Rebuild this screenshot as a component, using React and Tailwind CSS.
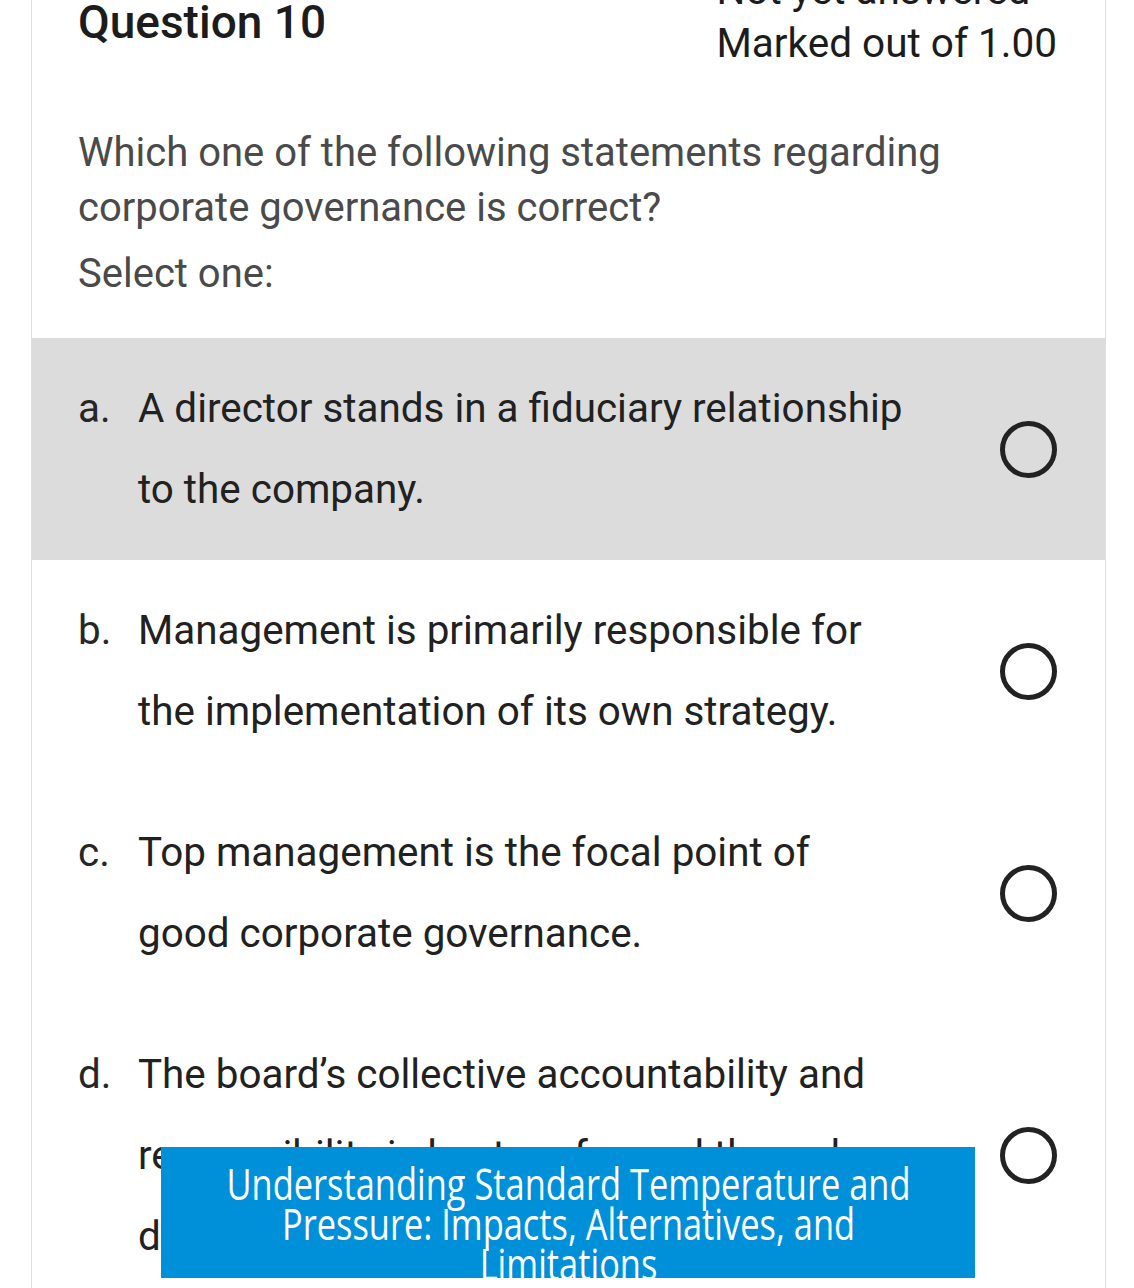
export default function App() {
  const options = [
    { l: "a.", t: "A director stands in a fiduciary relationship to the company.", bg: "bg-[#dcdcdc]" },
    { l: "b.", t: "Management is primarily responsible for the implementation of its own strategy.", bg: "" },
    { l: "c.", t: "Top management is the focal point of good corporate governance.", bg: "" },
    { l: "d.", t: "The board’s collective accountability and responsibility is best performed through delegation.", bg: "" },
  ];
  return (
    <div className="relative h-[1288px] w-full overflow-hidden bg-white font-['Roboto',sans-serif]">
      <div className="ml-[31px] w-[1075px] border-x border-[#dedede]">
        <div className="mt-[-36px] flex justify-between pl-[46px] pr-[48px]">
          <div className="pt-[31px] text-[46px] font-medium leading-[1.2] text-[#1c1c1c]">Question 10</div>
          <div className="text-[40.5px] leading-[53px] text-[#1c1c1c]">
            <div>Not yet answered</div>
            <div>Marked out of 1.00</div>
          </div>
        </div>
        <div className="mt-[55px] pl-[46px] pr-[48px] text-[40px] leading-[55px] text-[#4a4a4a]">
          <p>Which one of the following statements regarding corporate governance is correct?</p>
          <p className="mt-[11px]">Select one:</p>
        </div>
        <div className="mt-[37px]">
          {options.map((o) => (
            <div key={o.l} className={`flex items-center pl-[46px] pr-[48px] py-[30px] ${o.bg}`}>
              <div className="w-[60px] shrink-0 self-start text-[40.4px] leading-[81px] text-[#262626]">{o.l}</div>
              <div className="w-[768px] shrink-0 text-[40.4px] leading-[81px] text-[#212121]">{o.t}</div>
              <div className="ml-auto h-[57px] w-[57px] shrink-0 rounded-full border-[5px] border-[#222]" />
            </div>
          ))}
        </div>
      </div>
      <div className="absolute left-[161px] top-[1147px] flex h-[131px] w-[814px] justify-center overflow-hidden bg-[#0090d9]">
        <div className="w-[1017px] shrink-0 origin-top scale-x-[0.8] px-[40px] pt-[17px] text-center font-['Open_Sans',sans-serif] text-[43px] leading-[40px] text-white">
          Understanding Standard Temperature and Pressure: Impacts, Alternatives, and Limitations
        </div>
      </div>
    </div>
  );
}
